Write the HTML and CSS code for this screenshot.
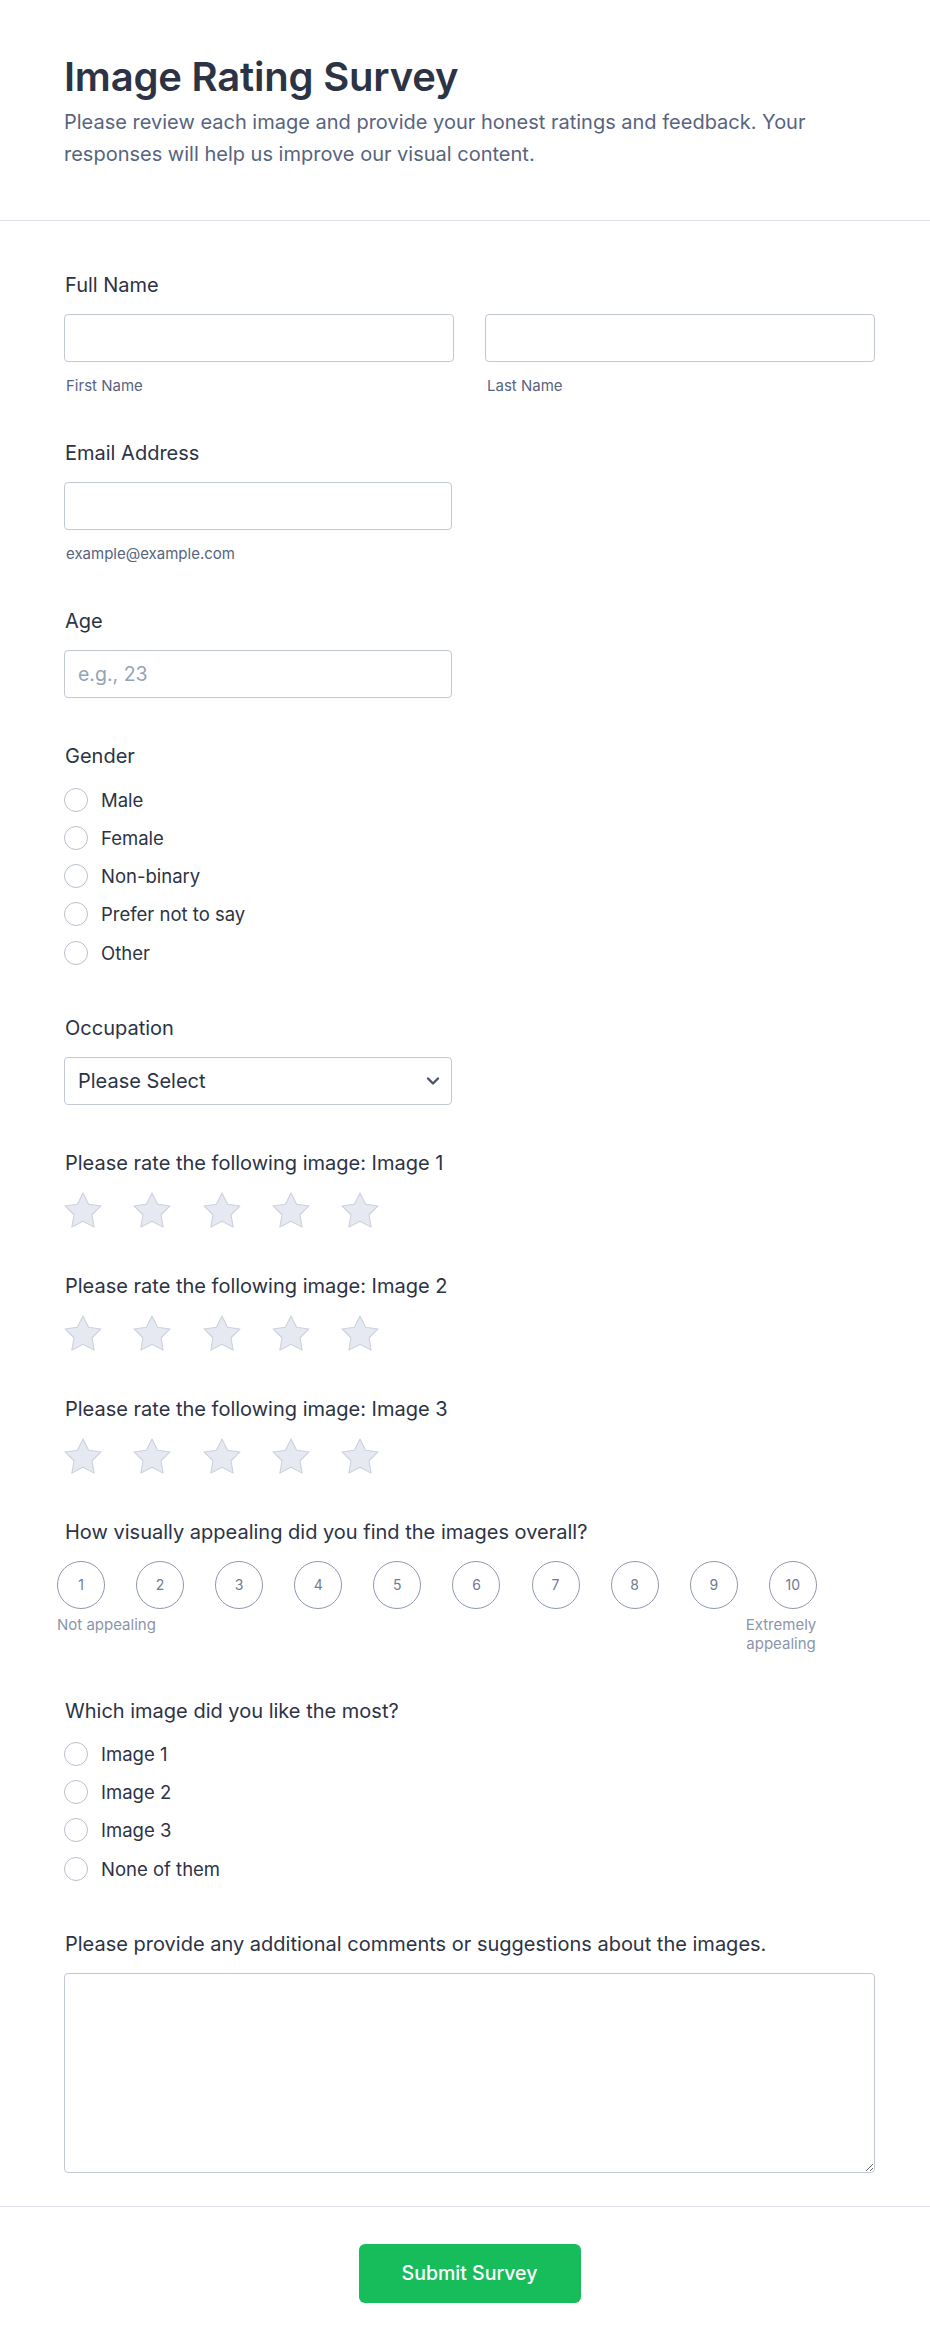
FILE: index.html
```html
<!DOCTYPE html>
<html lang="en">
<head>
<meta charset="utf-8">
<title>Image Rating Survey</title>
<link rel="stylesheet" href="styles.css">
</head>
<body>
<header class="header">
  <h1 class="title">Image Rating Survey</h1>
  <p class="subtitle">Please review each image and provide your honest ratings and feedback. Your responses will help us improve our visual content.</p>
</header>

<form class="form">
  <div class="field">
    <div class="label">Full Name</div>
    <div class="name-row">
      <div class="name-col">
        <input class="input" type="text">
        <div class="sublabel">First Name</div>
      </div>
      <div class="name-col">
        <input class="input" type="text">
        <div class="sublabel">Last Name</div>
      </div>
    </div>
  </div>

  <div class="field">
    <div class="label">Email Address</div>
    <input class="input input-single" type="text">
    <div class="sublabel">example@example.com</div>
  </div>

  <div class="field">
    <div class="label">Age</div>
    <input class="input input-single" type="text" placeholder="e.g., 23">
  </div>

  <div class="field">
    <div class="label">Gender</div>
    <div class="radios">
      <label class="radio"><input type="radio" name="g"><span>Male</span></label>
      <label class="radio"><input type="radio" name="g"><span>Female</span></label>
      <label class="radio"><input type="radio" name="g"><span>Non-binary</span></label>
      <label class="radio"><input type="radio" name="g"><span>Prefer not to say</span></label>
      <label class="radio"><input type="radio" name="g"><span>Other</span></label>
    </div>
  </div>

  <div class="field">
    <div class="label">Occupation</div>
    <div class="select-wrap">
      <div class="select">Please Select</div>
      <svg class="chevron" width="24" height="24" viewBox="0 0 24 24"><path d="M7 9.5l5 5 5-5" fill="none" stroke="#4a5568" stroke-width="2.4" stroke-linecap="round" stroke-linejoin="round"/></svg>
    </div>
  </div>

  <div class="field">
    <div class="label">Please rate the following image: Image 1</div>
    <div class="stars">
      <svg class="star" viewBox="1.5 1.5 21 20"><path d="M12 2l3.09 6.26L22 9.27l-5 4.87 1.18 6.88L12 17.77l-6.18 3.25L7 14.14 2 9.27l6.91-1.01L12 2z"/></svg>
      <svg class="star" viewBox="1.5 1.5 21 20"><path d="M12 2l3.09 6.26L22 9.27l-5 4.87 1.18 6.88L12 17.77l-6.18 3.25L7 14.14 2 9.27l6.91-1.01L12 2z"/></svg>
      <svg class="star" viewBox="1.5 1.5 21 20"><path d="M12 2l3.09 6.26L22 9.27l-5 4.87 1.18 6.88L12 17.77l-6.18 3.25L7 14.14 2 9.27l6.91-1.01L12 2z"/></svg>
      <svg class="star" viewBox="1.5 1.5 21 20"><path d="M12 2l3.09 6.26L22 9.27l-5 4.87 1.18 6.88L12 17.77l-6.18 3.25L7 14.14 2 9.27l6.91-1.01L12 2z"/></svg>
      <svg class="star" viewBox="1.5 1.5 21 20"><path d="M12 2l3.09 6.26L22 9.27l-5 4.87 1.18 6.88L12 17.77l-6.18 3.25L7 14.14 2 9.27l6.91-1.01L12 2z"/></svg>
    </div>
  </div>

  <div class="field">
    <div class="label">Please rate the following image: Image 2</div>
    <div class="stars">
      <svg class="star" viewBox="1.5 1.5 21 20"><path d="M12 2l3.09 6.26L22 9.27l-5 4.87 1.18 6.88L12 17.77l-6.18 3.25L7 14.14 2 9.27l6.91-1.01L12 2z"/></svg>
      <svg class="star" viewBox="1.5 1.5 21 20"><path d="M12 2l3.09 6.26L22 9.27l-5 4.87 1.18 6.88L12 17.77l-6.18 3.25L7 14.14 2 9.27l6.91-1.01L12 2z"/></svg>
      <svg class="star" viewBox="1.5 1.5 21 20"><path d="M12 2l3.09 6.26L22 9.27l-5 4.87 1.18 6.88L12 17.77l-6.18 3.25L7 14.14 2 9.27l6.91-1.01L12 2z"/></svg>
      <svg class="star" viewBox="1.5 1.5 21 20"><path d="M12 2l3.09 6.26L22 9.27l-5 4.87 1.18 6.88L12 17.77l-6.18 3.25L7 14.14 2 9.27l6.91-1.01L12 2z"/></svg>
      <svg class="star" viewBox="1.5 1.5 21 20"><path d="M12 2l3.09 6.26L22 9.27l-5 4.87 1.18 6.88L12 17.77l-6.18 3.25L7 14.14 2 9.27l6.91-1.01L12 2z"/></svg>
    </div>
  </div>

  <div class="field">
    <div class="label">Please rate the following image: Image 3</div>
    <div class="stars">
      <svg class="star" viewBox="1.5 1.5 21 20"><path d="M12 2l3.09 6.26L22 9.27l-5 4.87 1.18 6.88L12 17.77l-6.18 3.25L7 14.14 2 9.27l6.91-1.01L12 2z"/></svg>
      <svg class="star" viewBox="1.5 1.5 21 20"><path d="M12 2l3.09 6.26L22 9.27l-5 4.87 1.18 6.88L12 17.77l-6.18 3.25L7 14.14 2 9.27l6.91-1.01L12 2z"/></svg>
      <svg class="star" viewBox="1.5 1.5 21 20"><path d="M12 2l3.09 6.26L22 9.27l-5 4.87 1.18 6.88L12 17.77l-6.18 3.25L7 14.14 2 9.27l6.91-1.01L12 2z"/></svg>
      <svg class="star" viewBox="1.5 1.5 21 20"><path d="M12 2l3.09 6.26L22 9.27l-5 4.87 1.18 6.88L12 17.77l-6.18 3.25L7 14.14 2 9.27l6.91-1.01L12 2z"/></svg>
      <svg class="star" viewBox="1.5 1.5 21 20"><path d="M12 2l3.09 6.26L22 9.27l-5 4.87 1.18 6.88L12 17.77l-6.18 3.25L7 14.14 2 9.27l6.91-1.01L12 2z"/></svg>
    </div>
  </div>

  <div class="field">
    <div class="label">How visually appealing did you find the images overall?</div>
    <div class="scale">
      <div class="scale-row">
        <span class="scale-item">1</span>
        <span class="scale-item">2</span>
        <span class="scale-item">3</span>
        <span class="scale-item">4</span>
        <span class="scale-item">5</span>
        <span class="scale-item">6</span>
        <span class="scale-item">7</span>
        <span class="scale-item">8</span>
        <span class="scale-item">9</span>
        <span class="scale-item">10</span>
      </div>
      <div class="scale-labels">
        <span class="scale-low">Not appealing</span>
        <span class="scale-high">Extremely appealing</span>
      </div>
    </div>
  </div>

  <div class="field">
    <div class="label">Which image did you like the most?</div>
    <div class="radios">
      <label class="radio"><input type="radio" name="m"><span>Image 1</span></label>
      <label class="radio"><input type="radio" name="m"><span>Image 2</span></label>
      <label class="radio"><input type="radio" name="m"><span>Image 3</span></label>
      <label class="radio"><input type="radio" name="m"><span>None of them</span></label>
    </div>
  </div>

  <div class="field">
    <div class="label">Please provide any additional comments or suggestions about the images.</div>
    <textarea class="textarea"></textarea>
  </div>
</form>

<footer class="footer">
  <button class="submit" type="button">Submit Survey</button>
</footer>
</body>
</html>
```

FILE: styles.css
```css
* { box-sizing: border-box; }

body {
  margin: 0;
  background: #ffffff;
  font-family: Inter, "Noto Sans", "Liberation Sans", sans-serif;
  color: #2c3345;
}

.header {
  padding: 53px 64px 50px 64px;
  border-bottom: 1px solid #dcdee8;
}

.title {
  margin: 0;
  font-size: 40px;
  line-height: 48px;
  font-weight: 600;
  color: #2c3345;
  letter-spacing: -0.2px;
}

.subtitle {
  margin: 6px 0 0 0;
  font-size: 20px;
  line-height: 31.7px;
  color: #57647e;
  max-width: 790px;
}

.form {
  padding: 52px 55px 33px 64px;
}

.field + .field { margin-top: 46px; }

.label {
  font-size: 20px;
  line-height: 24px;
  font-weight: 400;
  color: #2c3345;
  padding-left: 1px;
  margin-bottom: 17px;
}

.name-row {
  display: flex;
  gap: 31px;
}

.name-col { width: 390px; }

.input {
  display: block;
  width: 100%;
  height: 48px;
  border: 1px solid #c3c8d5;
  border-radius: 4px;
  padding: 0 13px;
  font-family: inherit;
  font-size: 19.5px;
  color: #2c3345;
  background: #fff;
  outline: none;
}

.input-single { width: 388px; }

.input::placeholder { color: #94a3b8; }

.sublabel {
  margin-top: 15px;
  font-size: 15px;
  line-height: 18px;
  color: #57647e;
  padding-left: 2px;
}

.radios {
  margin-top: -5px;
  margin-bottom: -2px;
  display: flex;
  flex-direction: column;
}

.radio {
  display: flex;
  align-items: center;
  gap: 13px;
  height: 38.25px;
  font-size: 18.5px;
  color: #2c3345;
}

.radio input {
  appearance: none;
  -webkit-appearance: none;
  margin: 0;
  width: 24px;
  height: 24px;
  border: 1px solid #b9bfcd;
  border-radius: 50%;
  background: #fff;
  flex: none;
}

.select-wrap {
  position: relative;
  width: 388px;
}

.select {
  height: 48px;
  border: 1px solid #c3c8d5;
  border-radius: 4px;
  padding: 0 13px;
  font-size: 20px;
  line-height: 46px;
  color: #2c3345;
}

.chevron {
  position: absolute;
  right: 7px;
  top: 12px;
}

.stars {
  display: flex;
  gap: 31.3px;
}

.star {
  width: 38px;
  height: 36px;
  overflow: visible;
}

.star path {
  fill: #e6e9f1;
  stroke: #ccd1dd;
  stroke-width: 0.6;
  stroke-linejoin: round;
}

.scale {
  margin-left: -7px;
  width: 760px;
}

.scale-row {
  display: flex;
  gap: 31.1px;
  margin-top: 1px;
}

.scale-item {
  width: 48px;
  height: 48px;
  border: 1px solid #8f98ad;
  border-radius: 50%;
  display: flex;
  align-items: center;
  justify-content: center;
  font-size: 14px;
  color: #6f7c93;
  flex: none;
}

.scale-labels {
  display: flex;
  justify-content: space-between;
  align-items: flex-start;
  margin-top: 6px;
  font-size: 15px;
  line-height: 19px;
  color: #8c96a9;
}

.scale-high {
  width: 72px;
  text-align: center;
}

.textarea {
  display: block;
  width: 811px;
  height: 200px;
  border: 1px solid #c3c8d5;
  border-radius: 4px;
  font-family: inherit;
  font-size: 18px;
  resize: vertical;
  outline: none;
  padding: 12px;
}

.footer {
  border-top: 1px solid #e3e4ec;
  padding: 37px 55px 50px 64px;
  display: flex;
  justify-content: center;
}

.submit {
  width: 222px;
  height: 59px;
  border: none;
  border-radius: 6px;
  background: #18bd5b;
  color: #ffffff;
  font-family: inherit;
  font-size: 19.5px;
  font-weight: 500;
}
```
